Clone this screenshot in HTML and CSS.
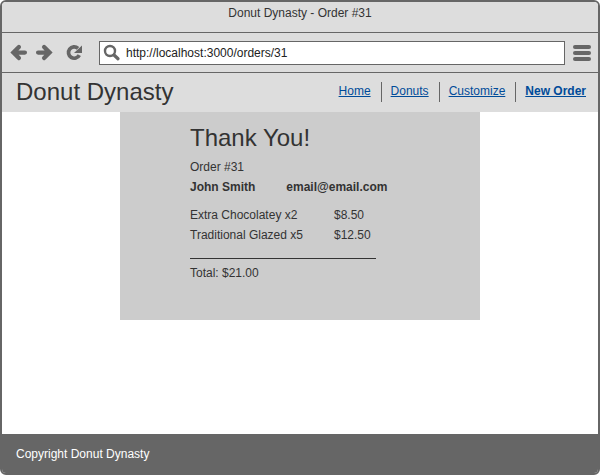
FILE: index.html
```html
<!DOCTYPE html>
<html lang="en">
<head>
<meta charset="utf-8">
<title>Donut Dynasty - Order #31</title>
<link rel="stylesheet" href="styles.css">
</head>
<body>
<div class="window">
  <div class="titlebar"><span>Donut Dynasty - Order #31</span></div>
  <div class="toolbar">
    <svg class="nav-icons" width="76" height="20" viewBox="0 0 76 20" fill="none" stroke="#666" stroke-linecap="round">
      <path d="M8.900 4.100 3.400 9.600l5.500 5.500M4.500 9.600h10.400" stroke-width="4.300"/>
      <path d="M34.100 4.100 39.600 9.600l-5.500 5.500M38.500 9.600H28.100" stroke-width="4.300"/>
      <path d="M68 5.300A5.700 5.700 0 1 0 69.300 12.100" stroke-width="3.700" stroke-linecap="butt"/>
      <path d="M72 2.500V10h-8z" fill="#666" stroke="none"/>
    </svg>
    <div class="address">
      <svg class="search-icon" width="18" height="18" viewBox="0 0 18 18" fill="none" stroke="#666">
        <circle cx="7" cy="7" r="5" stroke-width="2.400"/>
        <path d="m11 11 4 3.700" stroke-width="3.300" stroke-linecap="round"/>
      </svg>
      <span>http://localhost:3000/orders/31</span>
    </div>
    <div class="menu"><i></i><i></i><i></i></div>
  </div>
  <header class="site-header">
    <h1>Donut Dynasty</h1>
    <nav>
      <a href="#">Home</a>
      <a href="#">Donuts</a>
      <a href="#">Customize</a>
      <a href="#" class="current">New Order</a>
    </nav>
  </header>
  <main>
    <section class="receipt">
      <h2>Thank You!</h2>
      <p>Order #31</p>
      <p class="customer"><span>John Smith</span><span>email@email.com</span></p>
      <div class="items">
        <span>Extra Chocolatey x2</span><span>$8.50</span>
        <span>Traditional Glazed x5</span><span>$12.50</span>
      </div>
      <p class="total">Total: $21.00</p>
    </section>
  </main>
  <footer>Copyright Donut Dynasty</footer>
</div>
</body>
</html>
```
FILE: styles.css
```css
* { box-sizing: border-box; }
body {
  margin: 0;
  background: #fff;
  color: #333;
  font: 12px/20px "Liberation Sans", Arial, sans-serif;
}
h1, h2, p { margin: 0; }
h1, h2 { font-size: 24px; font-weight: 400; }
.window {
  width: 600px;
  height: 475px;
  display: flex;
  flex-direction: column;
  border: 2px solid #666;
  border-radius: 6px;
  overflow: hidden;
}
.titlebar {
  height: 31px;
  padding-top: 1px;
  background: #ddd;
  border-bottom: 1px solid #666;
  text-align: center;
}
.toolbar {
  height: 40px;
  display: flex;
  align-items: center;
  padding: 0 7px 0 8px;
  background: #ddd;
  border-bottom: 1px solid #666;
}
.nav-icons { flex: none; }
.address {
  flex: none;
  width: 466px;
  height: 24px;
  margin-left: 13px;
  padding-left: 3px;
  display: flex;
  align-items: center;
  background: #fff;
  border: 1px solid #666;
  color: #222;
}
.search-icon { margin-right: 5px; }
.menu {
  width: 18px;
  margin: 1px 0 0 8px;
  display: grid;
  gap: 2px;
}
.menu i { height: 4px; border-radius: 2px; background: #666; }
.site-header {
  height: 39px;
  display: flex;
  justify-content: space-between;
  align-items: center;
  padding: 0 12px 2px 14px;
  background: #ddd;
}
nav { display: flex; }
nav a {
  height: 20px;
  margin-top: 1px;
  padding: 0 10px 0 9px;
  color: #004b99;
  line-height: 18px;
  border-right: 1px solid #666;
}
nav a:last-child { padding-right: 0; border-right: 0; }
.current { font-weight: 700; }
main { flex: 1; background: #fff; }
.receipt {
  width: 360px;
  height: 208px;
  margin: 0 auto;
  padding: 10px 70px 0;
  background: #ccc;
}
h2 { height: 35px; line-height: 31px; }
.customer { display: flex; gap: 31px; font-weight: 700; }
.items {
  display: grid;
  grid-template-columns: 144px auto;
  width: 186px;
  height: 54px;
  margin-top: 8px;
  grid-auto-rows: 20px;
  border-bottom: 1px solid #333;
}
.total { margin-top: 4px; }
footer {
  height: 39px;
  padding: 0 14px;
  background: #666;
  color: #fff;
  line-height: 41px;
}
```
